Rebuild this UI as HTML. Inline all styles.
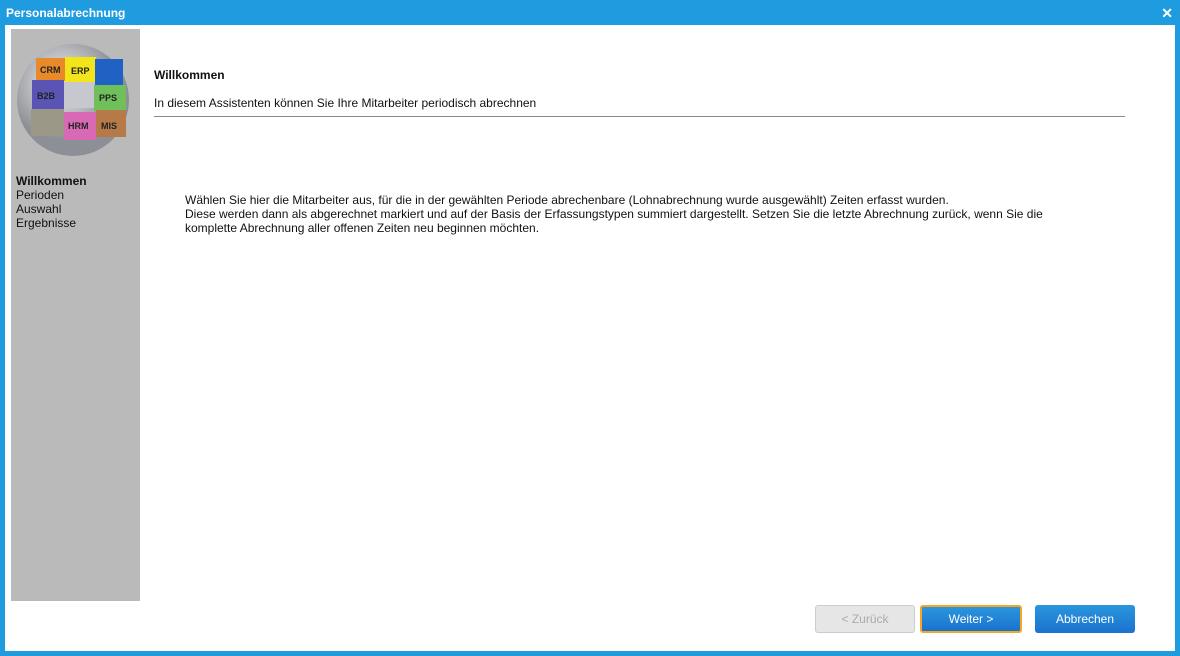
<!DOCTYPE html>
<html><head><meta charset="utf-8"><style>
*{margin:0;padding:0;box-sizing:border-box}
body{width:1180px;height:656px;overflow:hidden;background:#1f9be0;font-family:"Liberation Sans",Arial,sans-serif;position:relative}
.title{position:absolute;left:6px;top:6px;color:#fff;font-weight:bold;font-size:12px}
.close{position:absolute;right:7px;top:5px;color:#fff;font-weight:bold;font-size:14px}
.main{position:absolute;left:5px;top:25px;width:1170px;height:626px;background:#fff}
.side{position:absolute;left:11px;top:29px;width:129px;height:572px;background:#bababa}
.nav{position:absolute;left:16px;top:174px;font-size:12px;line-height:14px;color:#111}
.t{position:absolute;font-size:12px;color:#111}
.hr{position:absolute;left:154px;top:116px;width:971px;height:1px;background:#888}
.btn{position:absolute;top:605px;width:100px;height:28px;border-radius:3px;font-size:12px;text-align:center;line-height:28px;color:#fff;background:linear-gradient(#2a96dc,#1a72cf)}
</style></head><body>
<div class="title">Personalabrechnung</div><div class="close">✕</div>
<div class="main"></div>
<div class="side"></div>
<svg style="position:absolute;left:16px;top:42px" width="115" height="116" viewBox="0 0 115 116">
<defs><radialGradient id="g" cx="40%" cy="35%"><stop offset="0" stop-color="#f4f4f6"/><stop offset="1" stop-color="#8d8f96"/></radialGradient></defs>
<circle cx="57" cy="58" r="56" fill="url(#g)"/>
<rect x="20" y="16" width="30" height="23" fill="#e88a2a"/><rect x="49" y="15" width="31" height="25" fill="#f2e51c"/>
<rect x="79" y="17" width="28" height="26" fill="#1f62c4"/><rect x="16" y="38" width="32" height="30" fill="#5a55b5"/>
<rect x="48" y="40" width="31" height="26" fill="#c7c7cf"/><rect x="78" y="43" width="32" height="26" fill="#6fc05a"/>
<rect x="15" y="67" width="33" height="27" fill="#9c9888"/><rect x="48" y="70" width="32" height="28" fill="#d86ab5"/>
<rect x="80" y="68" width="30" height="27" fill="#b57a48"/>
<g font-size="9" font-weight="bold" fill="#222" font-family="Liberation Sans"><text x="24" y="31">CRM</text><text x="55" y="32">ERP</text><text x="21" y="57">B2B</text><text x="83" y="59">PPS</text><text x="52" y="87">HRM</text><text x="85" y="87">MIS</text></g>
</svg>
<div class="nav"><b>Willkommen</b><br>Perioden<br>Auswahl<br>Ergebnisse</div>
<div class="t" style="left:154px;top:68px;font-weight:bold">Willkommen</div>
<div class="t" style="left:154px;top:96px">In diesem Assistenten können Sie Ihre Mitarbeiter periodisch abrechnen</div>
<div class="hr"></div>
<div class="t" style="left:185px;top:193px;line-height:14px">Wählen Sie hier die Mitarbeiter aus, für die in der gewählten Periode abrechenbare (Lohnabrechnung wurde ausgewählt) Zeiten erfasst wurden.<br>Diese werden dann als abgerechnet markiert und auf der Basis der Erfassungstypen summiert dargestellt. Setzen Sie die letzte Abrechnung zurück, wenn Sie die<br>komplette Abrechnung aller offenen Zeiten neu beginnen möchten.</div>
<div class="btn" style="left:815px;background:#e6e6e6;color:#aaa;border:1px solid #ccc;line-height:26px">&lt; Zurück</div>
<div class="btn" style="left:920px;width:102px;border:2px solid #f5a623;line-height:24px">Weiter &gt;</div>
<div class="btn" style="left:1035px">Abbrechen</div>
</body></html>
